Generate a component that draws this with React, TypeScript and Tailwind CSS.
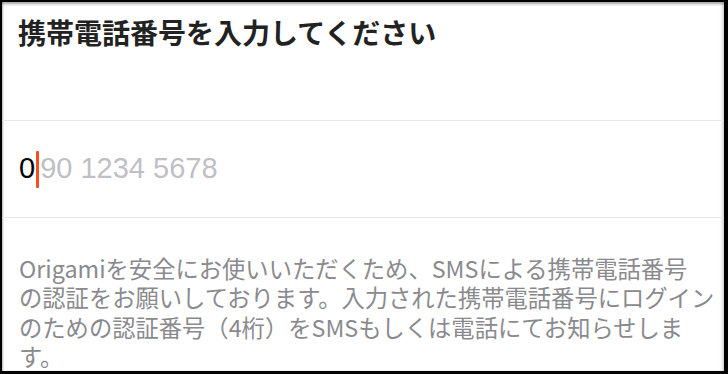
export default function App() {
  return (
    <div className="h-[374px] w-[728px] bg-black pb-[3px] pl-[2px] pr-[4px] pt-[2px]">
      <div className="h-full overflow-hidden bg-white shadow-[inset_0_3px_3px_-1px_rgba(0,0,0,0.35),inset_2px_0_2px_-1px_rgba(0,0,0,0.25),inset_-3px_0_3px_-1px_rgba(0,0,0,0.15)]">
        {/* Header */}
        <div className="h-[119px] border-b border-[#e8e8ea] px-[16px] pt-[12px]">
          <h1 className="font-['Noto_Sans_CJK_JP',sans-serif] text-[28px] font-bold leading-[36px] text-[#222]">
            携帯電話番号を入力してください
          </h1>
        </div>

        {/* Phone input */}
        <div className="flex h-[97px] items-center border-b border-[#e8e8ea] pl-[17px] font-['Liberation_Sans','Noto_Sans_CJK_JP',sans-serif] text-[29px]">
          <span className="text-black">0</span>
          <span className="mx-[1px] inline-block h-[37px] w-[3px] rounded-[1px] bg-[#f2501f]" />
          <span className="text-[#bfbfc5]">90 1234 5678</span>
        </div>

        {/* Notice */}
        <p className="whitespace-nowrap px-[17px] pt-[36px] font-['Noto_Sans_CJK_JP',sans-serif] text-[23.3px] leading-[29.4px] text-[#8a8a8e]">
          Origamiを安全にお使いいただくため、SMSによる携帯電話番号
          <br />
          の認証をお願いしております。入力された携帯電話番号にログイン
          <br />
          のための認証番号（4桁）をSMSもしくは電話にてお知らせしま
          <br />
          す。
        </p>
      </div>
    </div>
  );
}
